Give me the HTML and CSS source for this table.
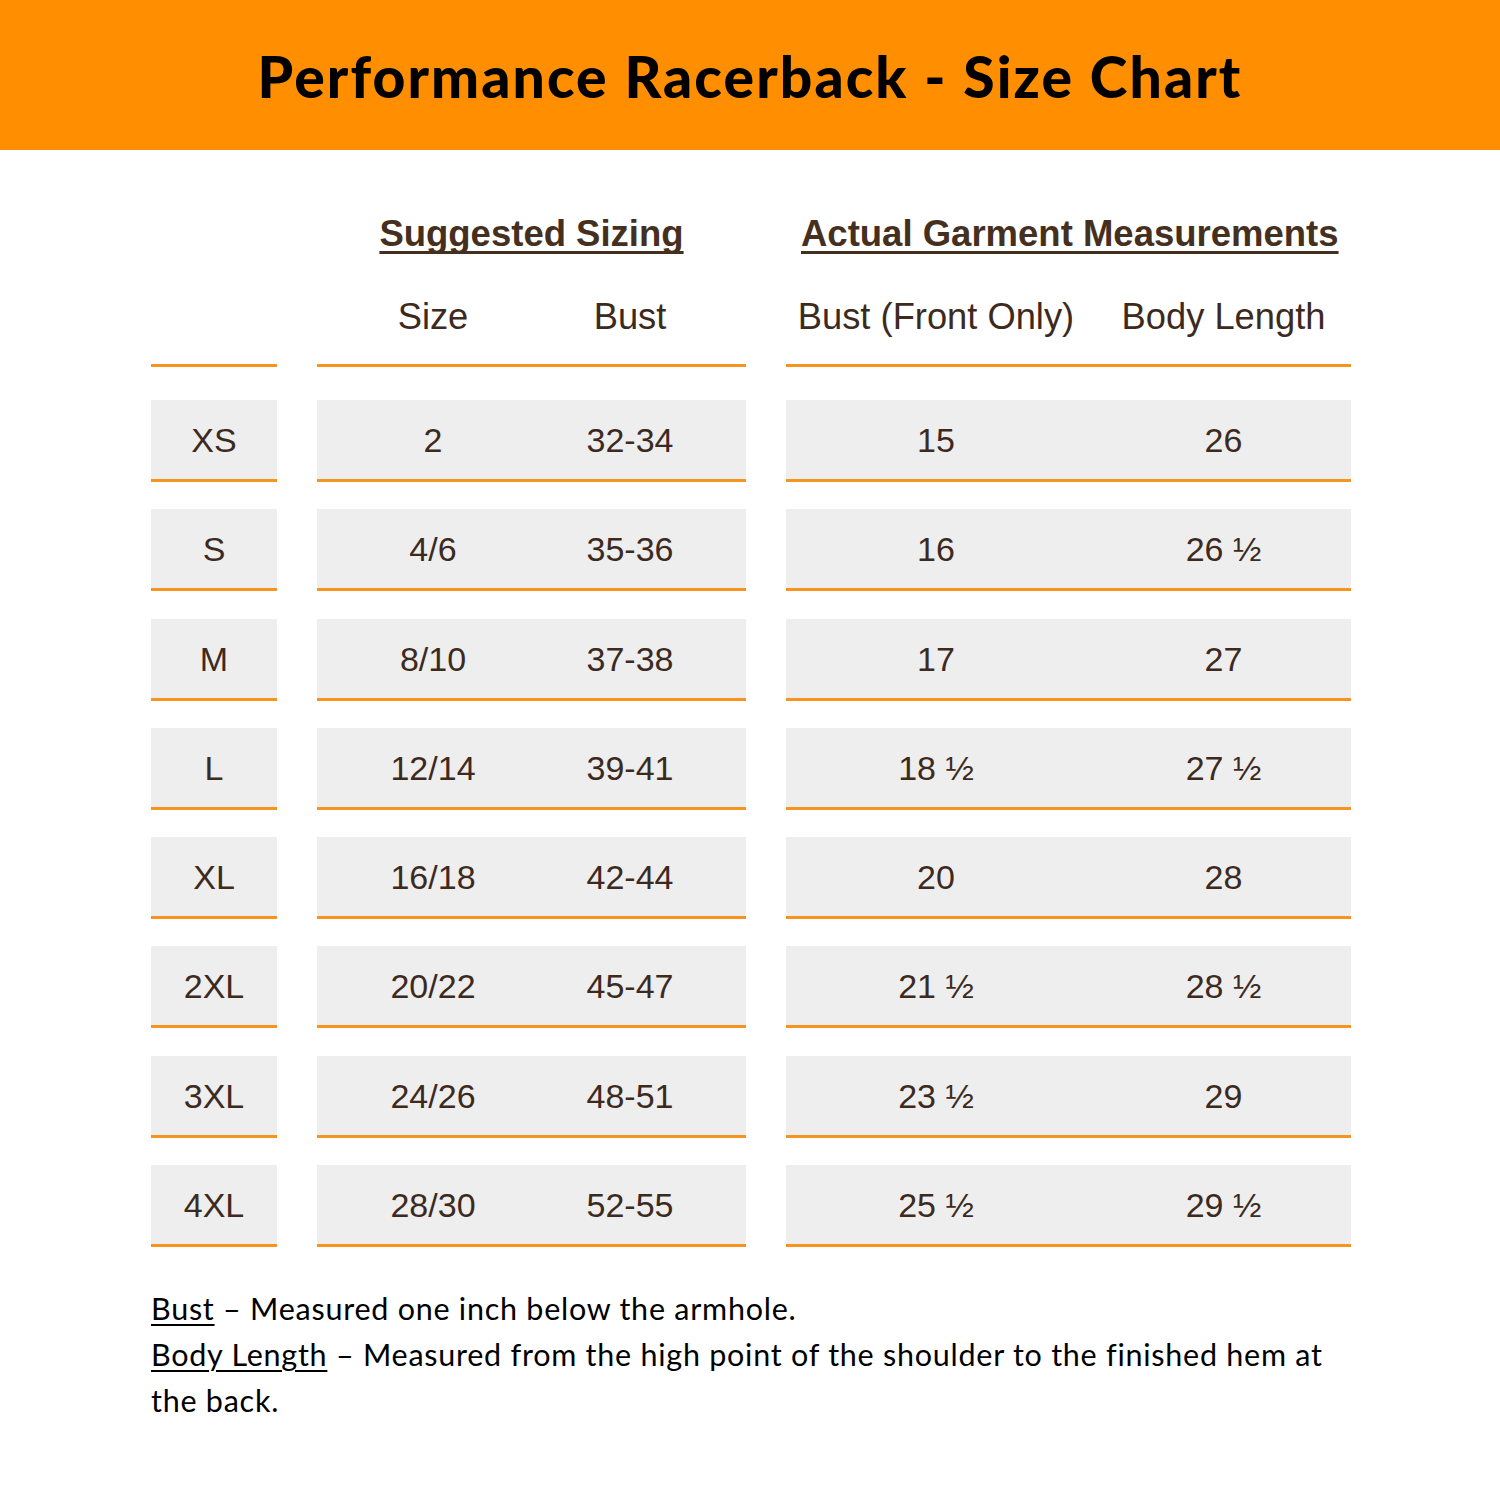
FILE: index.html
```html
<!DOCTYPE html>
<html lang="en">
<head>
<meta charset="utf-8">
<title>Performance Racerback - Size Chart</title>
<link rel="stylesheet" href="styles.css">
</head>
<body>
<header class="banner">
  <h1 class="title">Performance Racerback - Size Chart</h1>
</header>
<main class="chart">
  <div class="row groups">
    <div class="cell-empty"></div>
    <div class="group">Suggested Sizing</div>
    <div class="group">Actual Garment Measurements</div>
  </div>
  <div class="row heads">
    <div class="hcell"></div>
    <div class="hcell sub2"><span>Size</span><span>Bust</span></div>
    <div class="hcell sub3"><span>Bust (Front Only)</span><span class="second">Body Length</span></div>
  </div>

  <div class="row data">
    <div class="dcell">XS</div>
    <div class="dcell sub2"><span>2</span><span>32-34</span></div>
    <div class="dcell sub3"><span>15</span><span class="second">26</span></div>
  </div>
  <div class="row data">
    <div class="dcell">S</div>
    <div class="dcell sub2"><span>4/6</span><span>35-36</span></div>
    <div class="dcell sub3"><span>16</span><span class="second">26 ½</span></div>
  </div>
  <div class="row data">
    <div class="dcell">M</div>
    <div class="dcell sub2"><span>8/10</span><span>37-38</span></div>
    <div class="dcell sub3"><span>17</span><span class="second">27</span></div>
  </div>
  <div class="row data">
    <div class="dcell">L</div>
    <div class="dcell sub2"><span>12/14</span><span>39-41</span></div>
    <div class="dcell sub3"><span>18 ½</span><span class="second">27 ½</span></div>
  </div>
  <div class="row data">
    <div class="dcell">XL</div>
    <div class="dcell sub2"><span>16/18</span><span>42-44</span></div>
    <div class="dcell sub3"><span>20</span><span class="second">28</span></div>
  </div>
  <div class="row data">
    <div class="dcell">2XL</div>
    <div class="dcell sub2"><span>20/22</span><span>45-47</span></div>
    <div class="dcell sub3"><span>21 ½</span><span class="second">28 ½</span></div>
  </div>
  <div class="row data">
    <div class="dcell">3XL</div>
    <div class="dcell sub2"><span>24/26</span><span>48-51</span></div>
    <div class="dcell sub3"><span>23 ½</span><span class="second">29</span></div>
  </div>
  <div class="row data">
    <div class="dcell">4XL</div>
    <div class="dcell sub2"><span>28/30</span><span>52-55</span></div>
    <div class="dcell sub3"><span>25 ½</span><span class="second">29 ½</span></div>
  </div>

  <div class="notes">
    <p><span class="term">Bust</span> – Measured one inch below the armhole.</p>
    <p><span class="term">Body Length</span> – Measured from the high point of the shoulder to the finished hem at the back.</p>
  </div>
</main>
</body>
</html>
```

FILE: styles.css
```css
html, body {
  margin: 0;
  padding: 0;
  background: #ffffff;
}

.banner {
  background: #ff8e00;
  height: 150px;
  display: flex;
  align-items: center;
  justify-content: center;
}

.title {
  margin: 0;
  font-family: "Lato", "Liberation Sans", sans-serif;
  font-weight: 900;
  font-size: 57px;
  letter-spacing: 2.1px;
  color: #000000;
  padding-top: 2px;
}

.chart {
  padding-left: 151px;
  width: 1200px;
  font-family: "Liberation Sans", Arial, sans-serif;
  color: #3d2a1e;
}

.row {
  display: grid;
  grid-template-columns: 126px 429px 565px;
  column-gap: 40px;
}

.groups {
  padding-top: 64px;
  height: 40px;
  line-height: 40px;
}

.group {
  font-weight: bold;
  font-size: 36.5px;
  text-align: center;
  text-decoration: underline;
  text-decoration-thickness: 2.5px;
  text-underline-offset: 5px;
  text-decoration-skip-ink: none;
  color: #45301f;
}

.group:last-child {
  text-align: left;
  padding-left: 15px;
}

.heads {
  margin-top: 43px;
}

.hcell {
  height: 40px;
  line-height: 40px;
  padding-bottom: 27px;
  border-bottom: 3px solid #f5951f;
  font-size: 36.3px;
}

.sub2 {
  display: grid;
  grid-template-columns: 232px 162px 1fr;
}

.sub3 {
  display: grid;
  grid-template-columns: 300px 1fr;
}

.sub2 span,
.sub3 span {
  text-align: center;
  white-space: nowrap;
}

.sub3 .second {
  padding-left: 10px;
}

.data {
  margin-top: 27.3px;
}

.heads + .data {
  margin-top: 33px;
}

.dcell {
  height: 79px;
  line-height: 80px;
  background: #eeeeee;
  border-bottom: 3px solid #f5951f;
  font-size: 34px;
  text-align: center;
}

.notes {
  margin-top: 38px;
  width: 1200px;
  font-family: "Lato", "Liberation Sans", sans-serif;
  font-size: 30.5px;
  letter-spacing: 0.75px;
  line-height: 46px;
  color: #000000;
}

.notes p {
  margin: 0;
}

.term {
  text-decoration: underline;
  text-decoration-thickness: 2px;
  text-underline-offset: 4px;
}
```
